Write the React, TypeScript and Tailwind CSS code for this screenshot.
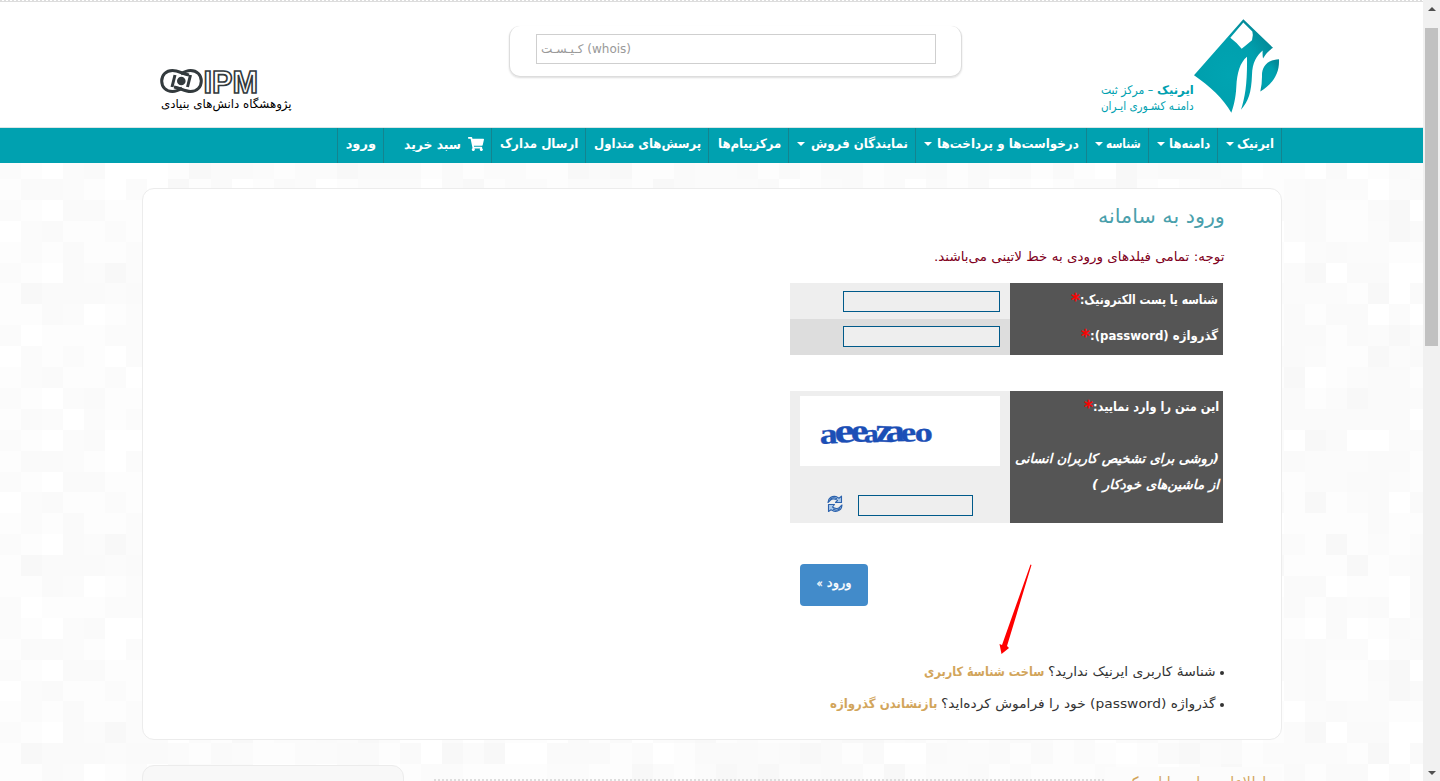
import { useLayoutEffect, useRef, useState, type ReactNode } from 'react'
import { FaShoppingCart } from 'react-icons/fa'

/* Text run stretched horizontally so that it fills a fixed width. */
function Fit({ w, className = '', children }: { w: number; className?: string; children: ReactNode }) {
  const ref = useRef<HTMLSpanElement>(null)
  const [k, setK] = useState(1)
  useLayoutEffect(() => {
    if (ref.current && ref.current.offsetWidth) {
      setK(w / ref.current.offsetWidth)
    }
  }, [w])
  return (
    <span dir="rtl" className={`flex shrink-0 justify-start ${className}`} style={{ width: w }}>
      <span className="origin-right" style={{ transform: `scaleX(${k})` }}>
        <span ref={ref} className="inline-block whitespace-nowrap">{children}</span>
      </span>
    </span>
  )
}

const SHADES = ['#ffffff', '#fdfdfd', '#fbfbfb', '#fafafa', '#f8f8f8']
const LEFT_TILES = [
  '2102300', '1332102', '2103311', '0231121', '1213112', '2103242', '1433323', '1132012', '2011122', '0212102',
  '1231120', '2102311', '1320212',
]

function shade(r: number, c: number) {
  const row = LEFT_TILES[r % LEFT_TILES.length]
  if (c < row.length) return Number(row[c])
  const v = Math.sin(r * 12.9898 + c * 78.233) * 43758.5453
  return [0, 1, 1, 2, 2, 3, 3, 4][Math.floor((v - Math.floor(v)) * 8)]
}

function Tiles() {
  const out: ReactNode[] = []
  for (let r = 0; r < 30; r++) {
    for (let c = 0; c < 68; c++) {
      out.push(
        <rect key={`${r}-${c}`} x={Math.round(c * 21.05)} y={Math.round(r * 20.9) - 5} width="22" height="22" fill={SHADES[shade(r % 22, c)]} />,
      )
    }
  }
  return <svg className="absolute inset-0 h-full w-full">{out}</svg>
}

function IrnicMark() {
  return (
    <svg viewBox="39 25 261 287" className="h-[96px] w-[87px]">
      <defs>
        <radialGradient id="teal" cx="0.45" cy="0.6" r="0.62">
          <stop offset="0" stopColor="#00a4b2" />
          <stop offset="0.6" stopColor="#00a0ae" />
          <stop offset="1" stopColor="#038a98" />
        </radialGradient>
      </defs>
      <path
        fill="url(#teal)"
        d="M190 28 L279 114 Q262 124 249 146 Q247 135 248 122 C230 138 217 158 216 195 C214 250 205 275 183 300 C196 260 202 220 201 141 C180 158 171 190 169 230 C167 270 160 290 154 309 C130 265 90 230 42 196 Z"
      />
      <path fill="#fff" d="M190 38 L217 65 Q221 76 216 91 Q198 106 185 117 Q170 98 151 84 Z" />
      <path fill="url(#teal)" d="M297 148 C262 150 245 170 246 200 Q246 225 241 245 C280 220 299 190 297 148 Z" />
    </svg>
  )
}

function IpmMark() {
  return (
    <svg viewBox="0 0 98 26" className="h-[26px] w-[98px]">
      <g fill="none" stroke="#333a3d">
        <path
          strokeWidth="3"
          d="M29 7 C23 6 18 2.500 12.500 2.500 C6 2.500 1.700 7 1.700 13 C1.700 19 6 23.500 12.500 23.500 C16 23.500 19 22 22 20"
        />
        <path
          strokeWidth="3"
          d="M14 19 C20 20 25 23.500 30.500 23.500 C37 23.500 41.300 19 41.300 13 C41.300 7 37 2.500 30.500 2.500 C27 2.500 24 4 21 6"
        />
        <path strokeWidth="3" d="M15 7 L12 19 M30.500 7 L27.500 19" />
      </g>
      <circle cx="21.300" cy="13" r="4.300" fill="#333a3d" />
      <text
        x="43.500" y="24.500" fontSize="31.500" fontWeight="700" textLength="54.500" lengthAdjust="spacingAndGlyphs"
        fill="#fff" stroke="#333a3d" strokeWidth="1.700" fontFamily="Liberation Sans, sans-serif"
      >
        IPM
      </text>
    </svg>
  )
}

function RefreshIcon() {
  return (
    <svg viewBox="0 0 16 18" className="h-[18px] w-4" fill="#a9c8ea" stroke="#2c62ac" strokeWidth="1.100" strokeLinejoin="round">
      <path d="M1 7.500 C1 3 5 .8 9 1.500 L12 3.200 L14.500 1.200 V7.500 H8.500 L10.500 5.500 C7.500 3.200 4.500 4 3.500 5 Z" />
      <path d="M15 10 C15 14.500 11 17 7 16.300 L4 14.700 L1.500 16.500 V9.500 H7.500 L5.500 12 C8.500 14.500 11.500 13.500 12.500 12.500 Z" />
      <path d="M3 4.500 C5 2.500 8 2.500 10 4 M13 13.500 C11 15.500 8 15.500 6 14" fill="none" />
    </svg>
  )
}

const NAV: { text: string; w: number; box: string; caret?: string; cart?: boolean }[] = [
  { text: 'ایرنیک', w: 37, box: 'w-16', caret: 'mr-[3px]' },
  { text: 'دامنه‌ها', w: 41, box: 'w-[69px]', caret: 'mr-1' },
  { text: 'شناسه', w: 35, box: 'w-[62px]', caret: 'mr-[3px]' },
  { text: 'درخواست‌ها و پرداخت‌ها', w: 142, box: 'w-[171px]', caret: 'mr-[5px]' },
  { text: 'نمایندگان فروش', w: 97, box: 'w-[127px]', caret: 'mr-[6px]' },
  { text: 'مرکزپیام‌ها', w: 63, box: 'w-20' },
  { text: 'پرسش‌های متداول', w: 107, box: 'w-[123px]' },
  { text: 'ارسال مدارک', w: 78, box: 'w-[94px]' },
  { text: 'سبد خرید', w: 57, box: 'w-[108px]', cart: true },
  { text: 'ورود', w: 30, box: 'w-[46px]' },
]

function Nav() {
  return (
    <nav className="relative h-9 border-t border-[#dce5e6] bg-[#00a1b0] pr-[141px]">
      <ul className="flex h-[35px] border-r border-[#14848f] text-[13px] font-bold leading-[32px] text-white">
        {NAV.map((n) => (
          <li key={n.text} className={`flex shrink-0 border-l border-[#14848f] pr-[7px] ${n.box}`}>
            {n.cart && <FaShoppingCart className="ml-[7px] mt-[8px] h-4 w-4 shrink-0" />}
            <Fit w={n.w} className={n.cart ? 'mt-px' : ''}>{n.text}</Fit>
            {n.caret && (
              <span className={`mt-[14px] h-0 w-0 border-x-4 border-t-4 border-x-transparent border-t-white ${n.caret}`} />
            )}
          </li>
        ))}
      </ul>
    </nav>
  )
}

function Header() {
  return (
    <header className="flex h-[127px] flex-col bg-white">
      <div className="h-[2px] shrink-0 border-b border-[#dddddd] bg-[repeating-linear-gradient(90deg,#dddddd_0_2px,#ffffff_2px_4px)]" />
      <div className="flex h-[125px] pl-[161px] pr-[143px]" dir="ltr">
        <div className="mt-[66px] w-[132px]">
          <div className="-ml-px h-[26px]"><IpmMark /></div>
          <Fit w={131} className="mt-px text-[12px] leading-[18px] text-black">پژوهشگاه دانش‌های بنیادی</Fit>
        </div>
        <div className="ml-[216px] mt-6 h-[51px] w-[453px] rounded-[11px] border border-t-0 border-[#dddddd] pl-[26px] pt-2 shadow-[0_1px_2px_#dddddd]">
          <div className="flex h-[30px] w-[400px] items-center border border-[#cfcfcf] pl-1 text-[#999999]">
            <Fit w={90} className="text-[12px] leading-[26px]"><span dir="ltr">کـیـسـت (whois)</span></Fit>
          </div>
        </div>
        <div className="ml-auto mt-[80px] text-[#00a1b0]">
          <div className="flex h-[16px]" dir="rtl">
            <Fit w={37} className="text-[12px] font-bold leading-[16px]">ایرنیک</Fit>
            <Fit w={56} className="text-[12px] leading-[16px]">&nbsp;– مرکز ثبت</Fit>
          </div>
          <Fit w={93} className="text-[12px] leading-[16px]">دامنـه کشـوری ایـران</Fit>
        </div>
        <div className="-ml-px mt-4"><IrnicMark /></div>
      </div>
    </header>
  )
}

const Star = () => <span className="text-[18px] font-normal text-[#ff0000] [-webkit-text-stroke:0.4px_#ff0000]">*</span>

function Field({ label, w, alt }: { label: string; w: number; alt?: boolean }) {
  return (
    <div className="flex h-9">
      <div className="flex w-[213px] bg-[#555555] pr-[5px] text-[13px] font-bold leading-[34px] text-white">
        <Fit w={w}>{label}</Fit>
        <Star />
      </div>
      <div className={`w-[220px] pr-[10px] ${alt ? 'bg-[#dddddd] pt-[7px]' : 'bg-[#eeeeee] pt-2'}`}>
        <div className="h-[21px] w-[157px] border border-[#005a8a] bg-[#eeeeee]" />
      </div>
    </div>
  )
}

function Captcha() {
  return (
    <div className="mt-9 flex h-[132px]">
      <div className="w-[213px] bg-[#555555] pr-1 pt-[3px] text-[13px] font-bold leading-[26px] text-white">
        <div className="flex h-[26px]">
          <Fit w={126}>این متن را وارد نمایید:</Fit>
          <Star />
        </div>
        <div className="mt-[26px] italic">
          <Fit w={204}>(روشی برای تشخیص کاربران انسانی</Fit>
          <Fit w={127}>از ماشین‌های خودکار )</Fit>
        </div>
      </div>
      <div className="w-[220px] bg-[#eeeeee] pr-[10px] pt-[5px]">
        <div className="h-[70px] w-[200px] bg-white">
          <svg viewBox="0 0 200 70" className="h-[70px] w-[200px]" direction="ltr">
            <g fill="#1c4fb6" stroke="#1c4fb6" strokeWidth="0.300" fontFamily="Liberation Serif, serif" fontWeight="700">
              <text transform="translate(20 48) rotate(-3) scale(1.250 1)" fontSize="29">a</text>
              <text transform="translate(35 47) rotate(-4) scale(1.350 1)" fontSize="34">e</text>
              <text transform="translate(51 46) rotate(-2) scale(1.200 1)" fontSize="33">e</text>
              <text transform="translate(64 46.500) rotate(-2) scale(1.150 1)" fontSize="26">a</text>
              <text transform="translate(75 45.500) rotate(2) scale(1.150 1)" fontSize="34">z</text>
              <text transform="translate(86 46) rotate(-3) scale(1.200 1)" fontSize="32">a</text>
              <text transform="translate(101 46) rotate(-3) scale(1.250 1)" fontSize="28">e</text>
              <text transform="translate(115 46) rotate(-3) scale(1.350 1)" fontSize="27">o</text>
            </g>
          </svg>
        </div>
        <div className="mt-[29px] flex pr-[27px]">
          <div className="h-[21px] w-[115px] border border-[#005a8a]" />
          <div className="mr-[15px] h-[18px]"><RefreshIcon /></div>
        </div>
      </div>
    </div>
  )
}

function Hint({ q, qw, a, aw }: { q: string; qw: number; a: string; aw: number }) {
  return (
    <li className="flex h-8 items-center text-[13px] leading-[32px] text-[#333333]">
      <span className="ml-[3px] flex h-8 w-[5px] items-center">
        <span className="mt-[2px] h-1 w-1 rounded-full bg-[#333333]" />
      </span>
      <Fit w={qw}>{q}</Fit>
      <Fit w={aw} className="mr-1 font-bold text-[#d2a55b]">{a}</Fit>
    </li>
  )
}

function LoginCard() {
  return (
    <section className="relative mr-[141px] mt-[25px] h-[552px] w-[1140px] rounded-[12px] border border-[#ececec] bg-white pr-[56px]">
      <h1 className="pt-[10px] text-[20px] leading-[34px] text-[#4aa0ac]"><Fit w={127}>ورود به سامانه</Fit></h1>
      <p className="mr-px mt-[11px] text-[13px] leading-[26px] text-[#800020]">
        <Fit w={290}>توجه: تمامی فیلدهای ورودی به خط لاتینی می‌باشند.</Fit>
      </p>
      <div className="mr-[2px] mt-[13px]">
        <Field label="شناسه یا پست الکترونیک:" w={138} />
        <Field label="گذرواژه (password):" w={128} alt />
        <Captcha />
      </div>
      <div className="mt-[41px] pr-[357px]">
        <button className="flex h-[42px] w-[68px] justify-center rounded-[4px] bg-[#428bca] text-[13px] leading-[38px] text-white [-webkit-text-stroke:0.3px_#ffffff]">
          <Fit w={35}>ورود <span className="text-[10px]">»</span></Fit>
        </button>
      </div>
      <ul className="mr-px mt-[50px]">
        <Hint q="شناسهٔ کاربری ایرنیک ندارید؟" qw={168} a="ساخت شناسهٔ کاربری" aw={120} />
        <Hint q="گذرواژه (password) خود را فراموش کرده‌اید؟" qw={275} a="بازنشاندن گذرواژه" aw={108} />
      </ul>
      <svg className="absolute left-[856px] top-[375px] h-[92px] w-9" viewBox="0 0 36 92">
        <path d="M31.500 0.500 L32.500 1 L8 82 L10 84 L2.500 90 L0.500 80 L3 81 Z" fill="#fe0000" />
      </svg>
    </section>
  )
}

function Scrollbar() {
  return (
    <div className="flex h-full w-[17px] shrink-0 flex-col items-center bg-[#f1f1f1]" dir="ltr">
      <span className="mt-[7px] h-0 w-0 border-x-4 border-b-4 border-x-transparent border-b-[#505050]" />
      <span className="mt-[17px] h-[318px] w-[13px] bg-[#c1c1c1]" />
      <span className="mb-[6px] mt-auto h-0 w-0 border-x-4 border-t-4 border-x-transparent border-t-[#505050]" />
    </div>
  )
}

export default function App() {
  return (
    <div className="flex h-[781px] w-[1440px] overflow-hidden bg-white font-['DejaVu_Sans',sans-serif]">
      <div className="h-full w-[1423px] shrink-0 overflow-hidden" dir="rtl">
        <Header />
        <Nav />
        <main className="relative h-[618px] overflow-hidden">
          <Tiles />
          <LoginCard />
          <div className="relative mr-[141px] mt-[25px] flex h-10 w-[1140px]">
            <div className="mt-[2px] h-10 w-[177px] bg-[#fcfcfc] pr-4 pt-1 text-[17px] leading-[24px] text-[#d2a55b]">
              <Fit w={140}>اطلاعات تماس با ایرنیک</Fit>
            </div>
            <div className="mt-[14px] h-[2px] w-[671px] bg-[repeating-linear-gradient(90deg,#dddddd_0_2px,transparent_2px_4px)]" />
            <div className="mr-auto h-10 w-[262px] rounded-t-[12px] border border-[#ececec] bg-[#f8f8f8]" />
          </div>
        </main>
      </div>
      <Scrollbar />
    </div>
  )
}
